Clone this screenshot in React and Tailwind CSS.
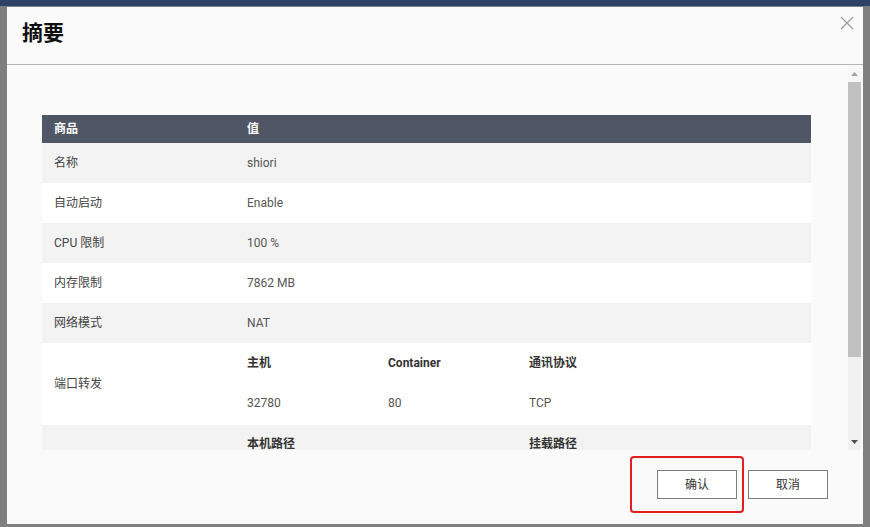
import React from "react";

const rows = [
  { label: "名称", value: "shiori" },
  { label: "自动启动", value: "Enable" },
  { label: "CPU 限制", value: "100 %" },
  { label: "内存限制", value: "7862 MB" },
  { label: "网络模式", value: "NAT" },
];

const ports = [{ host: "32780", container: "80", proto: "TCP" }];

function CloseIcon() {
  return (
    <svg width="14" height="14" viewBox="0 0 14 14" className="block">
      <path d="M1 1 L13 13 M13 1 L1 13" stroke="#9a9a9a" strokeWidth="1.2" fill="none" />
    </svg>
  );
}

function Row({ label, shade, children }) {
  return (
    <div className={`flex items-center ${shade ? "bg-[#f3f3f3]" : "bg-white"}`}>
      <div className="w-[193px] shrink-0 px-3 text-[#444]">{label}</div>
      <div className="flex-1 px-3">{children}</div>
    </div>
  );
}

function Scrollbar() {
  return (
    <div className="w-[13px] shrink-0 mr-[2px] mt-[1px] bg-[#f1f1f1] flex flex-col">
      <div className="h-[16px] bg-[#f7f7f7] flex items-center justify-center">
        <svg width="7" height="4" viewBox="0 0 7 4">
          <path d="M0 4 L3.5 0 L7 4 Z" fill="#a3a3a3" />
        </svg>
      </div>
      <div className="h-[275px] bg-[#c1c1c1]" />
      <div className="flex-1" />
      <div className="h-[16px] flex items-center justify-center">
        <svg width="7" height="4" viewBox="0 0 7 4">
          <path d="M0 0 L7 0 L3.5 4 Z" fill="#505050" />
        </svg>
      </div>
    </div>
  );
}

export default function App() {
  return (
    <div
      className="w-[870px] h-[527px] bg-[#7f7f7f] flex flex-col overflow-hidden text-[12px]"
      style={{ fontFamily: 'Roboto, "Noto Sans CJK SC", sans-serif' }}
    >
      <div className="h-[6px] bg-[#2e4169] shrink-0" />
      <div className="flex-1 pl-[7px] pr-[7px] pt-[1px] pb-[3px] flex">
        <div className="flex-1 bg-[#fafafa] flex flex-col">
          {/* header */}
          <div className="h-[58px] shrink-0 border-b border-[#b5b5b5] flex items-start justify-between pl-[15px] pr-[9px]">
            <h1 className="text-[21px] font-bold text-[#111] mt-[13px] leading-[26px]">摘要</h1>
            <button className="mt-[9px]">
              <CloseIcon />
            </button>
          </div>

          {/* body */}
          <div className="h-[385px] shrink-0 flex">
            <div className="flex-1 overflow-hidden">
              <div className="pt-[50px] pl-[35px] pr-[37px]">
                <div className="h-[28px] bg-[#4f5766] flex items-center text-white font-bold">
                  <div className="w-[193px] shrink-0 px-3">商品</div>
                  <div className="flex-1 px-3">值</div>
                </div>
                {rows.map((r, i) => (
                  <Row key={r.label} label={r.label} shade={i % 2 === 0}>
                    <div className="h-[40px] flex items-center text-[#555]">{r.value}</div>
                  </Row>
                ))}
                <Row label="端口转发" shade={false}>
                  <div className="py-[1px]">
                    <div className="h-[38px] flex items-center font-bold text-[#333]">
                      <div className="w-[141px]">主机</div>
                      <div className="w-[141px]">Container</div>
                      <div className="flex-1">通讯协议</div>
                    </div>
                    {ports.map((p) => (
                      <div key={p.host} className="h-[42px] flex items-center text-[#555]">
                        <div className="w-[141px]">{p.host}</div>
                        <div className="w-[141px]">{p.container}</div>
                        <div className="flex-1">{p.proto}</div>
                      </div>
                    ))}
                  </div>
                </Row>
                <Row label="" shade={true}>
                  <div className="h-[38px] flex items-center font-bold text-[#333]">
                    <div className="w-[282px]">本机路径</div>
                    <div className="flex-1">挂载路径</div>
                  </div>
                </Row>
              </div>
            </div>
            <Scrollbar />
          </div>

          {/* footer */}
          <div className="flex-1 flex justify-end items-start pt-[20px] pr-[35px] gap-[11px]">
            <div className="relative">
              <button className="w-[80px] h-[29px] bg-white border border-[#7d7d7d] text-[#333]">确认</button>
              <div className="absolute -top-[14px] -bottom-[14px] -left-[27px] -right-[7px] border-2 border-[#e31e1e] rounded-[4px] pointer-events-none" />
            </div>
            <button className="w-[80px] h-[29px] bg-white border border-[#7d7d7d] text-[#333]">取消</button>
          </div>
        </div>
      </div>
    </div>
  );
}
